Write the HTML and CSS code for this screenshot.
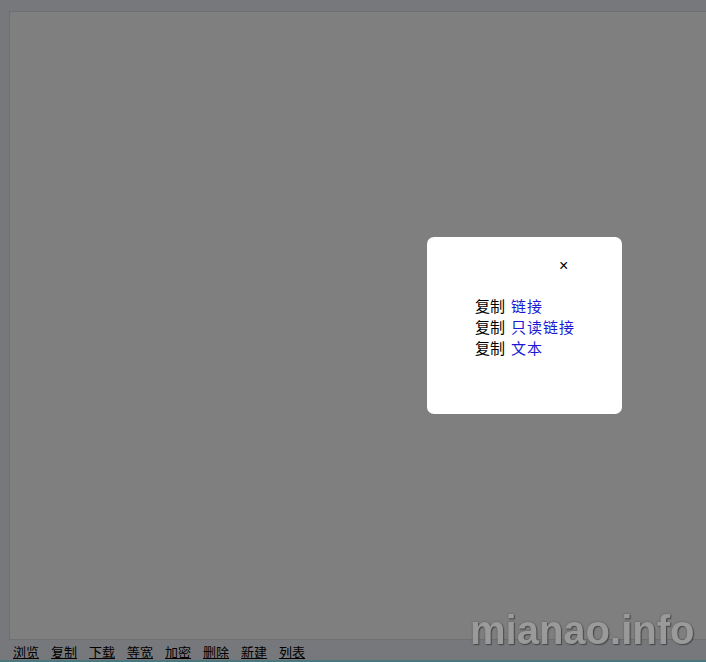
FILE: index.html
```html
<!DOCTYPE html>
<html lang="zh">
<head>
<meta charset="utf-8">
<link rel="stylesheet" href="styles.css">
</head>
<body>
<div class="page">
  <div class="editor-wrap">
    <textarea class="editor"></textarea>
  </div>
  <nav class="toolbar">
    <a href="#">浏览</a>
    <a href="#">复制</a>
    <a href="#">下载</a>
    <a href="#">等宽</a>
    <a href="#">加密</a>
    <a href="#">删除</a>
    <a href="#">新建</a>
    <a href="#">列表</a>
  </nav>
</div>
<div class="overlay">
  <div class="dialog">
    <div class="close">×</div>
    <ul class="copy-list">
      <li>复制<a href="#">链接</a></li>
      <li>复制<a href="#">只读链接</a></li>
      <li>复制<a href="#">文本</a></li>
    </ul>
  </div>
</div>
<div class="watermark">mianao.info</div>
</body>
</html>
```

FILE: styles.css
```css
html, body {
  margin: 0;
  padding: 0;
  height: 100%;
}
body {
  background: #eef0f6;
  font-family: "Noto Sans CJK SC", "Liberation Sans", sans-serif;
  overflow: hidden;
  border-bottom: 2px solid #96f0ff;
  box-sizing: border-box;
}
.page {
  display: flex;
  flex-direction: column;
  height: 660px;
  padding: 11px 0 0 9px;
  box-sizing: border-box;
}
.editor-wrap {
  flex: 1;
  display: flex;
}
.editor {
  flex: 1;
  margin: 0 -4px 0 0;
  border: 1px solid #dcdfe6;
  border-right: none;
  background: #fff;
  resize: none;
  outline: none;
}
.toolbar {
  display: flex;
  gap: 12px;
  padding: 3px 0 0 4px;
  height: 17px;
  font-size: 13px;
  line-height: 18px;
}
.toolbar a {
  color: #000;
  text-decoration: underline;
}
.overlay {
  position: fixed;
  inset: 0;
  background: rgba(0, 0, 0, 0.5);
}
.dialog {
  position: absolute;
  left: 427px;
  top: 237px;
  width: 195px;
  height: 177px;
  background: #fff;
  border-radius: 7px;
  box-sizing: border-box;
  padding: 58px 0 0 48px;
}
.close {
  position: absolute;
  left: 132px;
  top: 19px;
  font-family: "Liberation Sans", sans-serif;
  font-size: 16px;
  line-height: 20px;
  color: #000;
}
.copy-list {
  list-style: none;
  margin: 0;
  padding: 0;
  font-size: 15px;
  line-height: 21px;
  color: #000;
}
.copy-list a {
  color: #1a1ad6;
  text-decoration: none;
  margin-left: 6px;
  letter-spacing: 1px;
}
.watermark {
  position: fixed;
  left: 470px;
  top: 606px;
  font-family: "Liberation Sans", sans-serif;
  font-weight: bold;
  font-size: 40px;
  line-height: 48px;
  color: #9a9a9a;
  text-shadow: 0 0 2px #555, 1px 1px 1px #444;
}
```
